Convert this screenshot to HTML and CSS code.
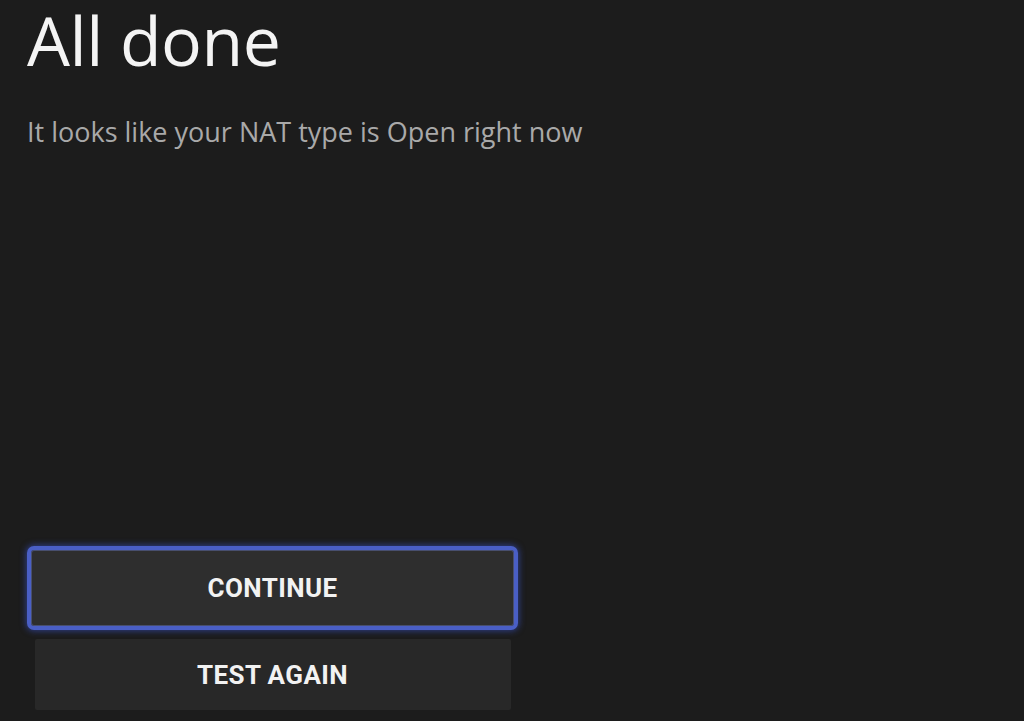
FILE: index.html
```html
<!DOCTYPE html>
<html lang="en">
<head>
<meta charset="utf-8">
<title>All done</title>
<link rel="stylesheet" href="styles.css">
</head>
<body>
<main class="screen">
  <header class="intro">
    <h1 class="title">All done</h1>
    <p class="subtitle">It looks like your NAT type is Open right now</p>
  </header>
  <div class="actions">
    <button class="btn btn-focused" type="button">CONTINUE</button>
    <button class="btn btn-plain" type="button">TEST AGAIN</button>
  </div>
</main>
</body>
</html>
```
FILE: styles.css
```css
html, body {
  margin: 0;
  padding: 0;
  height: 100%;
  background: #1c1c1c;
}

.screen {
  box-sizing: border-box;
  height: 721px;
  display: flex;
  flex-direction: column;
  justify-content: space-between;
  padding: 0 0 11px 27px;
  font-family: "Open Sans", "Noto Sans", sans-serif;
}

.title {
  margin: 0;
  padding-top: 0;
  font-size: 68px;
  font-weight: 400;
  line-height: 80px;
  color: #f4f4f4;
  letter-spacing: -0.5px;
}

.subtitle {
  margin: 34px 0 0 0;
  font-size: 27px;
  line-height: 36px;
  color: #a9a9a9;
  letter-spacing: 0;
}

.actions {
  width: 491px;
  display: flex;
  flex-direction: column;
  align-items: center;
  gap: 9px;
}

.btn {
  font-family: "Roboto", "DejaVu Sans", sans-serif;
  font-weight: 700;
  font-size: 26px;
  color: #f2f2f2;
  border: none;
  cursor: pointer;
  letter-spacing: 0.4px;
}

.btn-focused {
  box-sizing: border-box;
  width: 491px;
  height: 84px;
  background: #2e2e2e;
  border: 4px solid #4a5fc6;
  border-radius: 7px;
  box-shadow: 0 0 6px 1px rgba(60, 90, 220, 0.55), inset 0 0 0 1px rgba(120, 140, 230, 0.35);
}

.btn-plain {
  width: 476px;
  height: 71px;
  background: #282828;
  border-radius: 2px;
}
```
